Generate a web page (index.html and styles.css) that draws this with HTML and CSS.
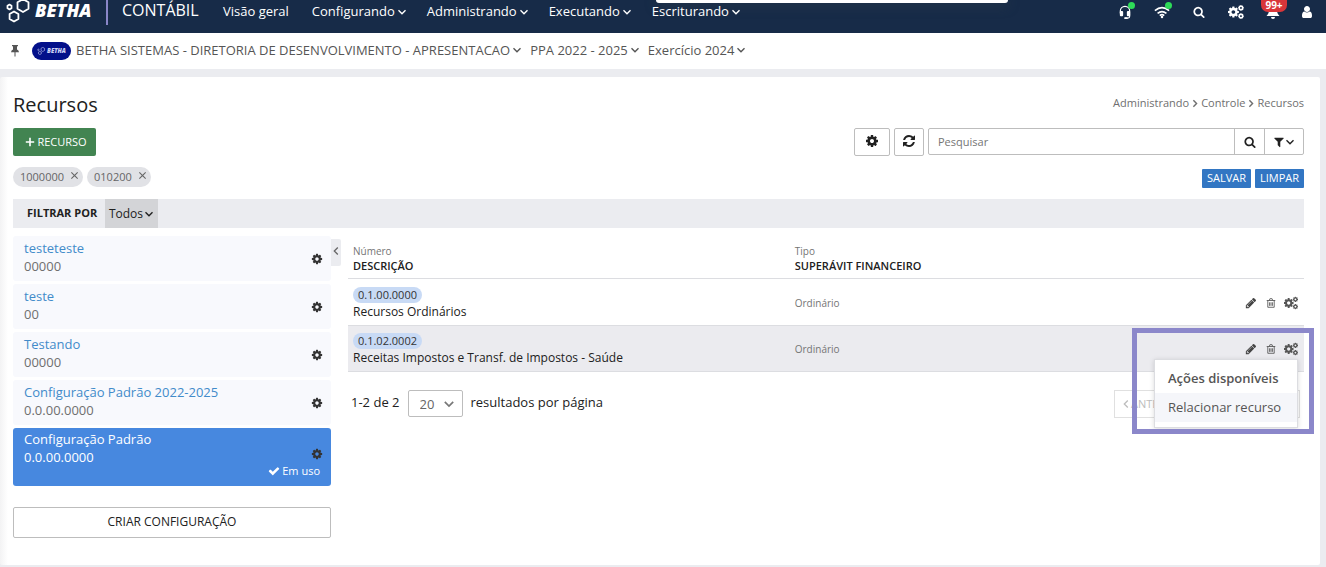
FILE: index.html
```html
<!DOCTYPE html>
<html lang="pt-BR">
<head>
<meta charset="utf-8">
<title>Recursos - Contábil</title>
<link rel="stylesheet" href="styles.css">
</head>
<body>
<svg class="sprite" aria-hidden="true">
  <symbol id="cog" viewBox="0 0 1792 1792"><path d="M1152 896q0-106-75-181t-181-75-181 75-75 181 75 181 181 75 181-75 75-181zm512-109v222q0 12-8 23t-20 13l-185 28q-19 54-39 91 35 50 107 138 10 12 10 25t-9 23q-27 37-99 108t-94 71q-12 0-26-9l-138-108q-44 23-91 38-16 136-29 186-7 28-36 28h-222q-14 0-24.500-8.500t-11.500-21.500l-28-184q-49-16-90-37l-141 107q-10 9-25 9-14 0-25-11-126-114-165-168-7-10-7-23 0-12 8-23 15-21 51-66.500t54-70.500q-27-50-41-99l-183-27q-13-2-21-12.500t-8-23.500v-222q0-12 8-23t19-13l186-28q14-46 39-92-40-57-107-138-10-12-10-24 0-10 9-23 26-36 98.500-107.500t94.500-71.500q13 0 26 10l138 107q44-23 91-38 16-136 29-186 7-28 36-28h222q14 0 24.500 8.500t11.500 21.500l28 184q49 16 90 37l142-107q9-9 24-9 13 0 25 10 129 119 165 170 7 8 7 22 0 12-8 23-15 21-51 66.500t-54 70.500q26 50 41 98l183 28q13 2 21 12.500t8 23.500z"/></symbol>
  <symbol id="cogs" viewBox="0 0 27 24"><use href="#cog" x="-2" y="1" width="22" height="22"/><use href="#cog" x="16" y="-1" width="12" height="12"/><use href="#cog" x="16" y="13" width="12" height="12"/></symbol>
  <symbol id="search" viewBox="0 0 1792 1792"><path d="M1216 832q0-185-131.500-316.500t-316.500-131.500-316.500 131.500-131.500 316.500 131.500 316.500 316.500 131.500 316.500-131.500 131.500-316.500zm512 832q0 52-38 90t-90 38q-54 0-90-38l-343-342q-179 124-399 124-143 0-273.500-55.500t-225-150-150-225-55.500-273.500 55.500-273.500 150-225 225-150 273.500-55.500 273.500 55.500 225 150 150 225 55.500 273.500q0 220-124 399l343 343q37 37 37 90z"/></symbol>
  <symbol id="refresh" viewBox="0 0 1792 1792"><path d="M1639 1056q0 5-1 7-64 268-268 434.500t-478 166.500q-146 0-282.500-55t-243.500-157l-129 129q-19 19-45 19t-45-19-19-45v-448q0-26 19-45t45-19h448q26 0 45 19t19 45-19 45l-137 137q71 66 161 102t187 36q134 0 250-65t186-179q11-17 53-117 8-23 30-23h192q13 0 22.500 9.500t9.500 22.500zm25-800v448q0 26-19 45t-45 19h-448q-26 0-45-19t-19-45 19-45l138-138q-148-137-349-137-134 0-250 65t-186 179q-11 17-53 117-8 23-30 23h-199q-13 0-22.500-9.500t-9.500-22.500v-7q65-268 270-434.500t480-166.500q146 0 284 55.500t245 156.500l130-129q19-19 45-19t45 19 19 45z"/></symbol>
  <symbol id="filter" viewBox="0 0 1792 1792"><path d="M1595 295q17 41-14 70l-493 493v742q0 42-39 59-13 5-25 5-27 0-45-19l-256-256q-19-19-19-45v-486l-493-493q-31-29-14-70 17-39 59-39h1280q42 0 59 39z"/></symbol>
  <symbol id="pencil" viewBox="0 0 1792 1792"><path d="M491 1536l91-91-235-235-91 91v107h128v128h107zm523-928q0-22-22-22-10 0-17 7l-542 542q-7 7-7 17 0 22 22 22 10 0 17-7l542-542q7-7 7-17zm-54-192l416 416-832 832h-416v-416zm683 96q0 53-37 90l-166 166-416-416 166-165q36-38 90-38 53 0 91 38l235 234q37 39 37 91z"/></symbol>
  <symbol id="trash" viewBox="0 0 14 14"><path d="M1 3.500h12M4.500 3.500l1-2.500h3l1 2.500M2.500 3.500v9.500h9v-9.500M5 6v5M7 6v5M9 6v5" fill="none" stroke="currentColor" stroke-width="1.200"/></symbol>
  <symbol id="check" viewBox="0 0 1792 1792"><path d="M1671 566q0 40-28 68l-724 724-136 136q-28 28-68 28t-68-28l-136-136-362-362q-28-28-28-68t28-68l136-136q28-28 68-28t68 28l294 295 656-657q28-28 68-28t68 28l136 136q28 28 28 68z"/></symbol>
  <symbol id="user" viewBox="0 0 1792 1792"><path d="M1536 1399q0 109-62.500 187t-150.500 78h-854q-88 0-150.500-78t-62.500-187q0-85 8.500-160.500t31.500-152 58.500-131 94-89 134.500-34.500q131 128 313 128t313-128q76 0 134.500 34.500t94 89 58.500 131 31.500 152 8.500 160.500zm-256-887q0 159-112.500 271.500t-271.500 112.500-271.500-112.500-112.500-271.500 112.500-271.500 271.500-112.500 271.500 112.500 112.500 271.500z"/></symbol>
  <symbol id="headset" viewBox="0 0 14 15"><path d="M2 9V6.500a5 5 0 0 1 10 0V12q0 2-2 2H7" fill="none" stroke="currentColor" stroke-width="1.300"/><rect x="1.500" y="6.500" width="3.500" height="5.500" rx="1"/><rect x="9" y="6.500" width="3.500" height="5.500" rx="1"/><rect x="6" y="13" width="4" height="2" rx="1"/></symbol>
  <symbol id="wifi" viewBox="0 0 18 14"><path d="M1 5.500q8-7 16 0M4 8.500q5-4 10 0M6.500 11q2.500-2 5 0" fill="none" stroke="currentColor" stroke-width="1.800"/><circle cx="9" cy="12.500" r="1.400"/></symbol>
  <symbol id="bell" viewBox="0 0 14 14"><path d="M7 1a4 4 0 0 0-4 4c0 3-1 4.500-2.500 6h13C12 9.500 11 8 11 5a4 4 0 0 0-4-4zM5 12h4a2 2 0 0 1-4 0z"/></symbol>
  <symbol id="down" viewBox="0 0 10 10"><path d="M1.500 3.200 5 6.700 8.500 3.200" fill="none" stroke="currentColor" stroke-width="1.400"/></symbol>
  <symbol id="left" viewBox="0 0 10 10"><path d="M6.800 1.500 3.300 5 6.800 8.500" fill="none" stroke="currentColor" stroke-width="1.300"/></symbol>
  <symbol id="right" viewBox="0 0 10 10"><path d="M3.200 1.500 6.700 5 3.200 8.500" fill="none" stroke="currentColor" stroke-width="1.600"/></symbol>
  <symbol id="plus" viewBox="0 0 10 10"><path d="M5 .8v8.400M.8 5h8.400" fill="none" stroke="currentColor" stroke-width="1.600"/></symbol>
  <symbol id="close" viewBox="0 0 10 10"><path d="M1.500 1.500l7 7M8.500 1.500l-7 7" fill="none" stroke="currentColor" stroke-width="1.200"/></symbol>
  <symbol id="pin" viewBox="0 0 10 12"><path d="M2 0h6v1.300H7v3.200q1.800.8 2 2.700H5.500V11.500h-1V7.200H1q.2-1.900 2-2.700V1.300H2z"/></symbol>
  <symbol id="hexes" viewBox="0 0 26 28"><path d="M17 1.200l5.500 3v6.600L17 14l-5.500-3.200V4.200zM8 13.500l4.400 2.500v5L8 23.500 3.600 21v-5zM3.500 6.600l2 1.200v2.400l-2 1.200-2-1.200V7.800z" fill="none" stroke="currentColor" stroke-width="1.800" stroke-linejoin="round"/></symbol>
</svg>

<header class="topbar">
  <div class="topbar-notch"></div>
  <div class="brand"><svg class="brand-mark"><use href="#hexes"/></svg><span class="brand-name">BETHA</span></div>
  <span class="product">CONTÁBIL</span>
  <nav class="menu">
    <a href="#">Visão geral</a>
    <a href="#">Configurando<svg class="ic10"><use href="#down"/></svg></a>
    <a href="#">Administrando<svg class="ic10"><use href="#down"/></svg></a>
    <a href="#">Executando<svg class="ic10"><use href="#down"/></svg></a>
    <a href="#">Escriturando<svg class="ic10"><use href="#down"/></svg></a>
  </nav>
  <div class="tools">
    <button class="tool" aria-label="Suporte"><svg class="ic14"><use href="#headset"/></svg><i class="dot"></i></button>
    <button class="tool" aria-label="Conexão"><svg class="ic16"><use href="#wifi"/></svg><i class="dot"></i></button>
    <button class="tool" aria-label="Buscar"><svg class="ic12"><use href="#search"/></svg></button>
    <button class="tool" aria-label="Configurações"><svg class="ic16"><use href="#cogs"/></svg></button>
    <button class="tool" aria-label="Notificações"><svg class="ic14"><use href="#bell"/></svg><span class="badge">99+</span></button>
    <button class="tool" aria-label="Usuário"><svg class="ic14"><use href="#user"/></svg></button>
  </div>
</header>

<div class="context">
  <svg class="pin"><use href="#pin"/></svg>
  <span class="entity-logo"><svg><use href="#hexes"/></svg>BETHA</span>
  <a href="#">BETHA SISTEMAS - DIRETORIA DE DESENVOLVIMENTO - APRESENTACAO<svg class="ic10"><use href="#down"/></svg></a>
  <a href="#">PPA 2022 - 2025<svg class="ic10"><use href="#down"/></svg></a>
  <a href="#">Exercício 2024<svg class="ic10"><use href="#down"/></svg></a>
</div>

<main class="page">
  <div class="title-row">
    <h1>Recursos</h1>
    <nav class="crumbs"><a href="#">Administrando</a><svg><use href="#right"/></svg><a href="#">Controle</a><svg><use href="#right"/></svg><a href="#">Recursos</a></nav>
  </div>

  <div class="action-row">
    <button class="btn-new"><svg class="ic10"><use href="#plus"/></svg>RECURSO</button>
    <div class="search-tools">
      <button class="btn-box wide" aria-label="Opções"><svg class="ic14"><use href="#cog"/></svg></button>
      <button class="btn-box" aria-label="Atualizar"><svg class="ic14"><use href="#refresh"/></svg></button>
      <div class="search">
        <input type="text" placeholder="Pesquisar" aria-label="Pesquisar">
        <button class="search-go" aria-label="Pesquisar"><svg class="ic12"><use href="#search"/></svg></button>
        <button class="search-filter" aria-label="Filtros"><svg class="ic12"><use href="#filter"/></svg><svg class="ic10"><use href="#down"/></svg></button>
      </div>
    </div>
  </div>

  <div class="chip-row">
    <span class="chip">1000000<button aria-label="Remover 1000000"><svg><use href="#close"/></svg></button></span>
    <span class="chip">010200<button aria-label="Remover 010200"><svg><use href="#close"/></svg></button></span>
    <div class="chip-actions"><button>SALVAR</button><button>LIMPAR</button></div>
  </div>

  <div class="filter-bar">
    <strong>FILTRAR POR</strong>
    <button>Todos<svg class="ic10"><use href="#down"/></svg></button>
  </div>

  <div class="columns">
    <aside class="side">
      <button class="collapse" aria-label="Recolher"><svg class="ic10"><use href="#left"/></svg></button>
      <div class="configs">
        <div class="config"><div><a href="#">testeteste</a><p>00000</p></div><button aria-label="Opções"><svg class="ic12"><use href="#cog"/></svg></button></div>
        <div class="config"><div><a href="#">teste</a><p>00</p></div><button aria-label="Opções"><svg class="ic12"><use href="#cog"/></svg></button></div>
        <div class="config"><div><a href="#">Testando</a><p>00000</p></div><button aria-label="Opções"><svg class="ic12"><use href="#cog"/></svg></button></div>
        <div class="config"><div><a href="#">Configuração Padrão 2022-2025</a><p>0.0.00.0000</p></div><button aria-label="Opções"><svg class="ic12"><use href="#cog"/></svg></button></div>
        <div class="config active"><div><a href="#">Configuração Padrão</a><p>0.0.00.0000</p></div><div class="active-side"><button aria-label="Opções"><svg class="ic12"><use href="#cog"/></svg></button><span><svg class="ic12"><use href="#check"/></svg>Em uso</span></div></div>
      </div>
      <button class="btn-create">CRIAR CONFIGURAÇÃO</button>
    </aside>

    <section class="list">
      <table>
        <thead>
          <tr><th class="col-desc"><small>Número</small>DESCRIÇÃO</th><th><small>Tipo</small>SUPERÁVIT FINANCEIRO</th><th class="col-acts"></th></tr>
        </thead>
        <tbody>
          <tr>
            <td><span class="code">0.1.00.0000</span><div>Recursos Ordinários</div></td>
            <td class="kind">Ordinário</td>
            <td><div class="acts"><button aria-label="Editar"><svg class="ic12"><use href="#pencil"/></svg></button><button aria-label="Excluir"><svg class="ic10"><use href="#trash"/></svg></button><button aria-label="Ações"><svg class="ic14"><use href="#cogs"/></svg></button></div></td>
          </tr>
          <tr class="hover">
            <td><span class="code">0.1.02.0002</span><div>Receitas Impostos e Transf. de Impostos - Saúde</div></td>
            <td class="kind">Ordinário</td>
            <td><div class="acts"><button aria-label="Editar"><svg class="ic12"><use href="#pencil"/></svg></button><button aria-label="Excluir"><svg class="ic10"><use href="#trash"/></svg></button><button aria-label="Ações"><svg class="ic14"><use href="#cogs"/></svg></button>
              <div class="dropdown"><strong>Ações disponíveis</strong><a href="#">Relacionar recurso</a></div>
              <div class="highlight"></div>
            </div></td>
          </tr>
        </tbody>
      </table>
      <div class="pager">
        <span>1-2 de 2</span>
        <span class="select-wrap"><select aria-label="Resultados por página"><option>20</option></select><svg class="ic12"><use href="#down"/></svg></span>
        <span>resultados por página</span>
        <div class="pages"><button disabled><svg class="ic10"><use href="#left"/></svg>ANTERIOR</button><button disabled aria-label="Próxima página"><svg class="ic10"><use href="#right"/></svg></button></div>
      </div>
    </section>
  </div>
</main>
</body>
</html>
```

FILE: styles.css
```css
* { box-sizing: border-box; }
body { margin: 0; background: #ebecf0; color: #212121; font: 12px/18px "Open Sans", sans-serif; }
h1, p { margin: 0; }
a { color: inherit; text-decoration: none; }
button, input, select { font: inherit; color: inherit; margin: 0; padding: 0; border: 0; background: none; }
button { display: inline-flex; align-items: center; justify-content: center; }
svg { fill: currentColor; flex: none; display: block; }
.sprite { position: absolute; width: 0; height: 0; }
.ic10 { width: 10px; height: 10px; }
.ic12 { width: 12px; height: 12px; }
.ic14 { width: 14px; height: 14px; }
.ic16 { width: 16px; height: 14px; }

.topbar { position: relative; display: flex; align-items: flex-start; height: 33px; padding: 0 10px 0 6px; background: #172b48; color: #fff; }
.topbar-notch { position: absolute; left: 656px; top: 0; width: 352px; height: 3px; background: #fff; border-radius: 0 0 6px 6px; box-shadow: 0 2px 12px #33424c; }
.brand { display: flex; width: 102px; height: 25px; border-right: 2px solid #8a86c8; }
.brand-mark { width: 26px; height: 28px; margin-top: -2px; }
.brand-name { margin-left: 3px; font-size: 18px; line-height: 21px; font-weight: 800; font-style: italic; }
.product { width: 102px; padding-left: 14px; font-size: 16px; line-height: 21px; }
.menu { position: relative; display: flex; gap: 20px; padding-left: 13px; font-size: 13px; line-height: 23px; }
.menu a { display: flex; align-items: center; gap: 2px; }
.menu a:first-child { margin-right: 3px; }
.tools { display: flex; align-items: center; gap: 13px; height: 24px; margin-left: auto; }
.tool { position: relative; width: 24px; height: 24px; }
.tool:last-child { width: 18px; }
.dot { position: absolute; right: 2px; top: 2px; width: 7px; height: 7px; border-radius: 50%; background: #2edb58; }
.badge { position: absolute; left: 0; top: 0; width: 26px; height: 12px; border-radius: 0 0 7px 7px; background: #d9363a; font-size: 10px; line-height: 10px; font-weight: 700; }

.context { display: flex; align-items: center; gap: 8px; height: 36px; padding-left: 10px; background: #fff; color: #555; font-size: 13px; line-height: 20px; }
.context a { display: flex; align-items: center; gap: 2px; padding-bottom: 2px; }
.pin { width: 10px; height: 12px; margin-right: 4px; }
.entity-logo { display: flex; align-items: center; justify-content: center; gap: 1px; width: 39px; height: 18px; margin-right: -3px; border-radius: 9px; background: #03108a; color: #cfd3f5; font-size: 6px; font-weight: 800; font-style: italic; }
.entity-logo svg { width: 9px; height: 9px; }

.page { margin: 8px 6px 3px 0; padding: 13px 16px 27px 13px; background: linear-gradient(90deg, #f3f3f4, #fff 8px); border-radius: 2px; }
.title-row { display: flex; align-items: center; justify-content: space-between; height: 30px; }
h1 { font-size: 20px; line-height: 30px; font-weight: 400; }
.crumbs { display: flex; align-items: center; gap: 1px; padding-bottom: 4px; font-size: 11px; color: #6f6f6f; }
.crumbs svg { width: 10px; height: 9px; }

.action-row { display: flex; justify-content: space-between; align-items: flex-start; margin-top: 8px; height: 28px; }
.btn-new { width: 83px; height: 28px; gap: 2px; padding-left: 3px; border-radius: 2px; background: #428451; color: #fff; font-size: 11px; }
.search-tools { display: flex; gap: 4px; align-items: flex-start; flex: none; width: 450px; }
.btn-box { width: 30px; height: 28px; border: 1px solid #bdbdbd; border-radius: 2px; }
.btn-box { padding-bottom: 2px; }
.btn-box.wide { width: 36px; }
.search { display: flex; flex: 1; height: 27px; border: 1px solid #bdbdbd; border-radius: 2px; }
.search input { flex: 1; min-width: 0; padding: 0 9px; font-size: 11px; }
.search input::placeholder { color: #757575; opacity: 1; }
.search-go { width: 30px; border-left: 1px solid #bdbdbd; }
.search-filter { width: 39px; border-left: 1px solid #bdbdbd; }

.chip-row { display: flex; align-items: center; gap: 4px; margin-top: 11px; height: 20px; }
.chip { display: flex; align-items: center; gap: 6px; height: 20px; padding: 0 4px 0 7px; border-radius: 10px; background: #e1e2e6; color: #666; font-size: 11px; }
.chip button { height: 20px; padding-bottom: 3px; }
.chip svg { width: 9px; height: 9px; }
.chip-actions { display: flex; gap: 4px; margin-left: auto; padding-top: 2px; }
.chip-actions button { width: 49px; height: 19px; border-radius: 1px; background: #3276c3; color: #fff; font-size: 11px; }

.filter-bar { display: flex; height: 29px; margin-top: 12px; background: #ebecf0; }
.filter-bar strong { width: 92px; padding-left: 14px; font-size: 11px; line-height: 28px; }
.filter-bar button { width: 53px; gap: 1px; background: #d3d4d7; }

.columns { display: flex; gap: 17px; margin-top: 8px; }
.side { position: relative; width: 318px; flex: none; }
.collapse { position: absolute; left: 318px; top: 3px; width: 10px; height: 27px; padding-bottom: 3px; background: #ebecf0; border-radius: 0 2px 2px 0; color: #666; }
.configs { display: grid; gap: 3px; }
.config { display: flex; justify-content: space-between; align-items: center; min-height: 45px; padding: 3px 8px 6px 11px; border-radius: 3px; background: #f8f9fd; font-size: 13px; line-height: 18px; color: #6f6f6f; }
.config a { display: block; color: #428bca; }
.config button { height: 12px; margin-top: 4px; color: #333; }
.config.active { align-items: flex-start; min-height: 57px; padding-top: 2px; background: #4788df; color: #fff; }
.config.active a { color: #fff; }
.active-side { display: flex; flex-direction: column; align-items: flex-end; padding-top: 14px; font-size: 11px; }
.active-side span { display: flex; align-items: center; gap: 2px; padding-right: 3px; margin-top: 2px; }
.btn-create { width: 100%; height: 31px; padding-bottom: 2px; margin-top: 21px; border: 1px solid #bdbdbd; border-radius: 2px; }

.list { flex: 1; min-width: 0; padding-top: 4px; }
table { width: 100%; border-collapse: collapse; table-layout: fixed; }
th { height: 38px; padding: 2px 5px 4px; text-align: left; vertical-align: bottom; font-size: 11px; line-height: 16px; font-weight: 600; border-bottom: 1px solid #dcdde1; }
th small { display: block; font-size: 10px; line-height: 14px; color: #757575; font-weight: 400; }
.col-desc { width: 46%; }
.col-acts { width: 80px; }
td { height: 47px; padding: 2px 5px 0; line-height: 18px; border-bottom: 1px solid #dcdde1; }
.hover td { height: 46px; }
.hover { background: #ebebef; }
.code { display: block; width: 69px; height: 16px; margin-top: 2px; border-radius: 8px; background: #c8daf5; color: #333; font-size: 11px; line-height: 15px; text-align: center; }
.kind { font-size: 10px; color: #757575; padding-left: 7px; }
th:nth-child(2) { padding-left: 7px; }
.acts { position: relative; display: flex; justify-content: flex-end; align-items: center; gap: 6px; height: 18px; padding-right: 1px; color: #555; }
.acts button { width: 14px; height: 18px; }
.acts button:first-child { color: #444; }
.dropdown { position: absolute; z-index: 2; right: 1px; top: 19px; width: 144px; padding: 4px 0 5px; border: 1px solid #dcdde1; background: #fff; box-shadow: 0 1px 5px rgba(0, 0, 0, .15); font-size: 13px; color: #555; }
.dropdown strong, .dropdown a { display: block; padding: 0 13px; line-height: 29px; white-space: nowrap; }
.dropdown strong { font-weight: 600; }
.dropdown a { background: #f5f6fa; }
.highlight { position: absolute; z-index: 3; right: -15px; top: -12px; width: 182px; height: 106px; border: 5px solid #8b87ca; pointer-events: none; }

.pager { display: flex; align-items: center; gap: 8px; margin-top: 18px; padding: 0 4px 0 3px; height: 28px; font-size: 13px; line-height: 18px; }
.pager > span:not(.select-wrap) { padding-bottom: 3px; }
.select-wrap { position: relative; }
select { appearance: none; width: 55px; height: 27px; padding-left: 11px; border: 1px solid #bdbdbd; border-radius: 2px; color: #666; }
.select-wrap svg { position: absolute; right: 8px; top: 8px; color: #777; pointer-events: none; }
.pages { display: flex; margin-left: auto; }
.pages button { width: 93px; height: 28px; justify-content: flex-start; padding-left: 6px; border: 1px solid #e0e0e0; color: #bdbdbd; font-size: 11px; }
.pages button + button { border-left: 0; }
```
